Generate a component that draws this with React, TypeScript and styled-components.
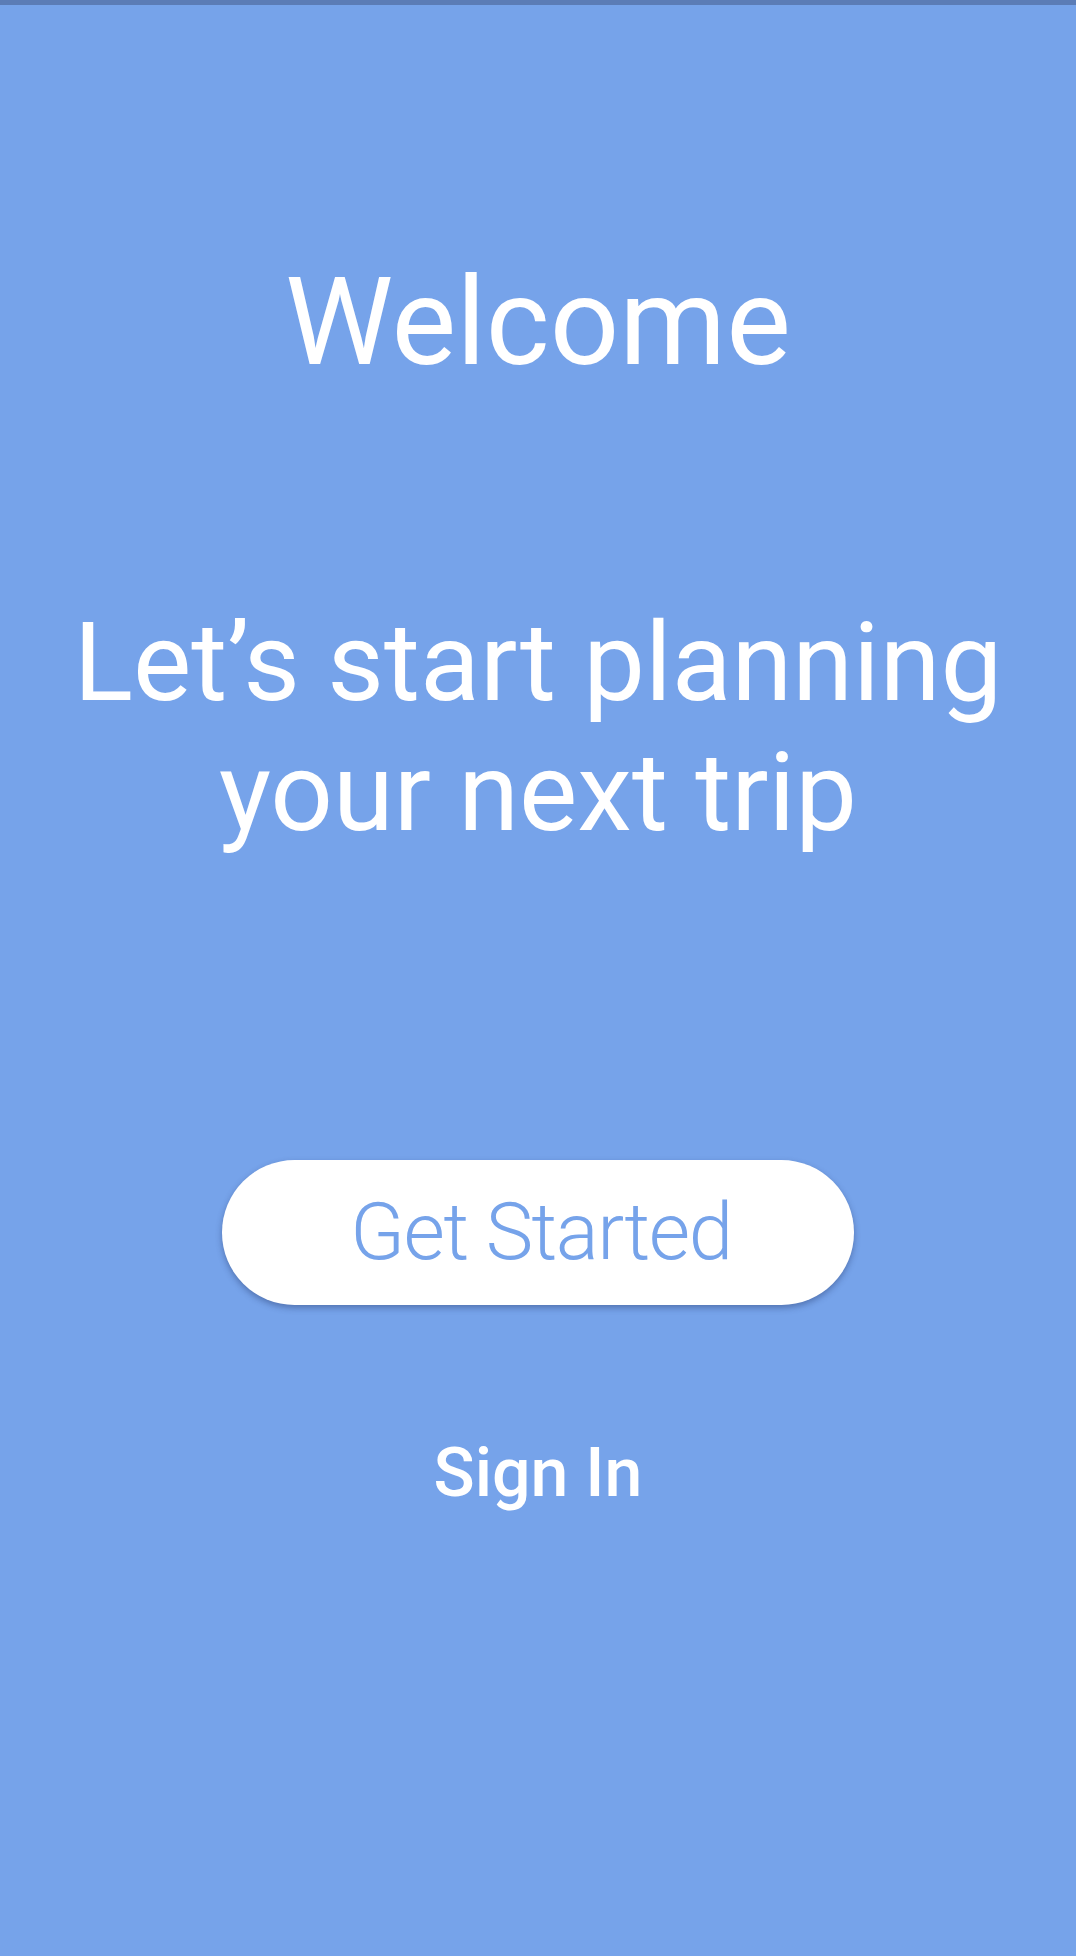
import React from "react";
import styled, { createGlobalStyle } from "styled-components";

const GlobalStyle = createGlobalStyle`
  html, body {
    margin: 0;
    padding: 0;
    background: #76a3ea;
  }
  body {
    font-family: Roboto, "Noto Sans", "Liberation Sans", sans-serif;
    -webkit-font-smoothing: antialiased;
  }
`;

const Screen = styled.div`
  min-height: 1956px;
  background: #76a3ea;
  display: flex;
  flex-direction: column;
  align-items: center;
`;

const StatusBar = styled.div`
  align-self: stretch;
  height: 5px;
  background: #5b7cb6;
`;

const Title = styled.h1`
  margin: 246px 0 0;
  font-family: Roboto, sans-serif;
  font-weight: 400;
  font-size: 122px;
  line-height: 144px;
  color: #ffffff;
  text-align: center;
`;

const Tagline = styled.p`
  margin: 203px 0 0;
  font-family: Roboto, sans-serif;
  font-weight: 400;
  font-size: 110px;
  line-height: 130px;
  color: #ffffff;
  text-align: center;
`;

const PrimaryButton = styled.button`
  margin-top: 302px;
  width: 632px;
  height: 145px;
  border: none;
  border-radius: 73px;
  background: #ffffff;
  color: #76a3ea;
  font-family: Roboto, sans-serif;
  font-weight: 300;
  font-size: 80px;
  letter-spacing: -1.5px;
  line-height: 145px;
  padding: 0 0 0 6px;
  box-shadow: 0 3px 6px rgba(40, 60, 110, 0.45);
  cursor: pointer;
`;

const LinkButton = styled.button`
  margin-top: 128px;
  border: none;
  background: transparent;
  color: #ffffff;
  font-family: Roboto, sans-serif;
  font-weight: 500;
  font-size: 68px;
  line-height: 80px;
  padding: 0;
  cursor: pointer;
`;

export default function App() {
  return (
    <>
      <GlobalStyle />
      <Screen>
        <StatusBar />
        <Title>Welcome</Title>
        <Tagline>
          Let’s start planning
          <br />
          your next trip
        </Tagline>
        <PrimaryButton>Get Started</PrimaryButton>
        <LinkButton>Sign In</LinkButton>
      </Screen>
    </>
  );
}
